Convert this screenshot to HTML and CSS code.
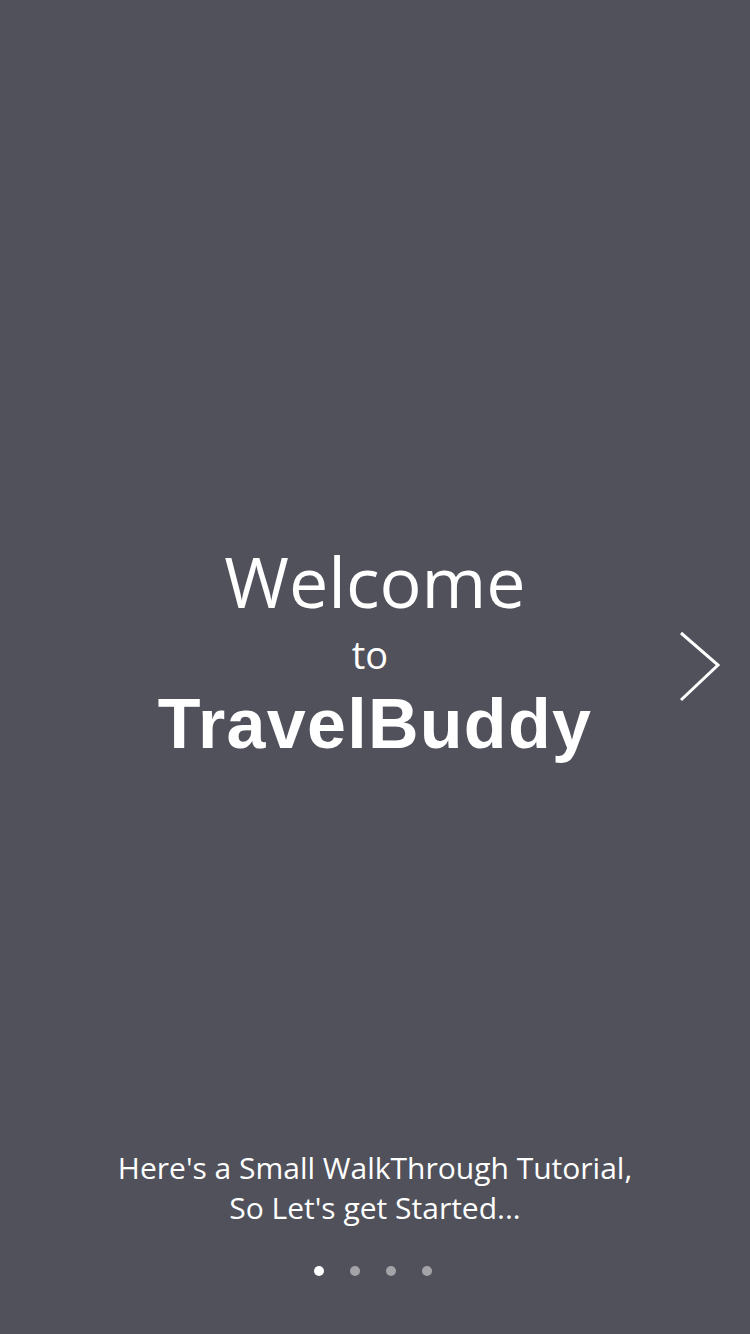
FILE: index.html
```html
<!DOCTYPE html>
<html>
<head>
<meta charset="utf-8">
<link rel="stylesheet" href="styles.css">
</head>
<body>
<div class="screen">
  <main class="hero">
    <div class="welcome">Welcome</div>
    <div class="to">to</div>
    <div class="brand">TravelBuddy</div>
  </main>
  <footer class="footer">
    <p class="intro">Here's a Small WalkThrough Tutorial,<br>So Let's get Started...</p>
    <div class="dots">
      <span class="dot active"></span>
      <span class="dot"></span>
      <span class="dot"></span>
      <span class="dot"></span>
    </div>
  </footer>
  <button class="next" aria-label="Next">
    <svg width="44" height="74" viewBox="0 0 44 74"><polyline points="3,3 40,35 3,70" fill="none" stroke="#ffffff" stroke-width="3"/></svg>
  </button>
</div>
</body>
</html>
```
FILE: styles.css
```css
* { box-sizing: border-box; }
html, body { margin: 0; padding: 0; }
body { background: #51515b; }
.screen {
  position: relative;
  width: 750px;
  height: 1334px;
  background: #51515b;
  color: #ffffff;
  display: flex;
  flex-direction: column;
  font-family: "Open Sans", "Liberation Sans", sans-serif;
}
.hero {
  flex: 1;
  display: flex;
  flex-direction: column;
  align-items: center;
  padding-top: 541px;
}
.welcome {
  font-size: 70px;
  line-height: 80px;
}
.to {
  font-size: 38px;
  line-height: 44px;
  margin-top: 11px;
  margin-left: -10px;
}
.brand {
  font-family: "Liberation Sans", Arial, sans-serif;
  font-weight: 700;
  font-size: 70px;
  line-height: 80px;
  letter-spacing: 1.3px;
  margin-top: 8px;
}
.footer {
  display: flex;
  flex-direction: column;
  align-items: center;
  padding-bottom: 58px;
}
.intro {
  margin: 0;
  font-size: 30px;
  line-height: 40px;
  text-align: center;
}
.dots {
  display: flex;
  gap: 26px;
  margin-top: 38px;
  margin-left: -4px;
}
.dot {
  width: 10px;
  height: 10px;
  border-radius: 50%;
  background: #a3a3a8;
}
.dot.active { background: #ffffff; }
.next {
  position: absolute;
  right: 28px;
  top: 630px;
  padding: 0;
  border: 0;
  background: transparent;
  display: block;
}
.next svg { display: block; }
```
